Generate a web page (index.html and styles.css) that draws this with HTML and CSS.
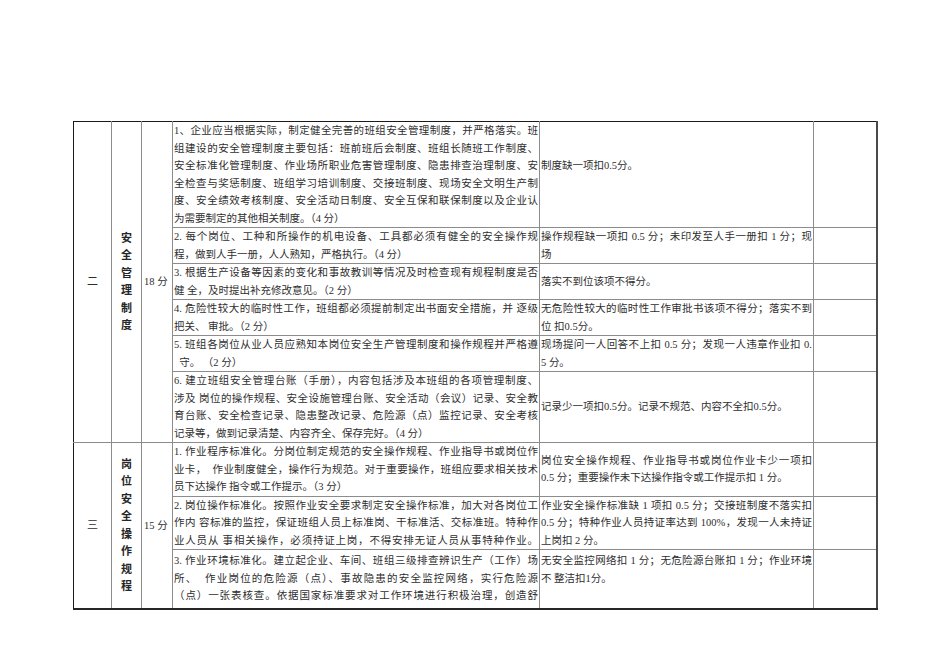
FILE: index.html
```html
<!DOCTYPE html>
<html lang="zh">
<head>
<meta charset="utf-8">
<title>班组安全管理考核表</title>
<link rel="stylesheet" href="styles.css">
</head>
<body>
<div class="page">
<table class="sheet">
<colgroup>
<col class="c-no"><col class="c-cat"><col class="c-score"><col class="c-req"><col class="c-rule"><col class="c-res">
</colgroup>
<tbody>
<tr>
<td rowspan="6" class="no">二</td>
<td rowspan="6" class="cat"><span class="vert">安全管理制度</span></td>
<td rowspan="6" class="score">18 分</td>
<td class="req">
<span class="l">1、企业应当根据实际，制定健全完善的班组安全管理制度，并严格落实。班</span>
<span class="l">组建设的安全管理制度主要包括：班前班后会制度、班组长随班工作制度、</span>
<span class="l">安全标准化管理制度、作业场所职业危害管理制度、隐患排查治理制度、安</span>
<span class="l">全检查与奖惩制度、班组学习培训制度、交接班制度、现场安全文明生产制</span>
<span class="l">度、安全绩效考核制度、安全活动日制度、安全互保和联保制度以及企业认</span>
<span class="e">为需要制定的其他相关制度。（4 分）</span>
</td>
<td class="rule"><span class="e">制度缺一项扣0.5分。</span><span class="blank"></span></td>
<td class="res"></td>
</tr>
<tr>
<td class="req">
<span class="l">2. 每个岗位、工种和所操作的机电设备、工具都必须有健全的安全操作规</span>
<span class="e">程，做到人手一册，人人熟知，严格执行。（4 分）</span>
</td>
<td class="rule">
<span class="l">操作规程缺一项扣 0.5 分；未印发至人手一册扣 1 分；现</span>
<span class="e">场</span>
</td>
<td class="res"></td>
</tr>
<tr>
<td class="req">
<span class="l">3. 根据生产设备等因素的变化和事故教训等情况及时检查现有规程制度是否</span>
<span class="e">健 全，及时提出补充修改意见。（2 分）</span>
</td>
<td class="rule"><span class="e">落实不到位该项不得分。</span></td>
<td class="res"></td>
</tr>
<tr>
<td class="req">
<span class="l">4. 危险性较大的临时性工作，班组都必须提前制定出书面安全措施，并 逐级</span>
<span class="e">把关、 审批。（2 分）</span>
</td>
<td class="rule">
<span class="l">无危险性较大的临时性工作审批书该项不得分；落实不到</span>
<span class="e">位 扣0.5分。</span>
</td>
<td class="res"></td>
</tr>
<tr>
<td class="req">
<span class="l">5. 班组各岗位从业人员应熟知本岗位安全生产管理制度和操作规程并严格遵</span>
<span class="e">&nbsp;&nbsp;守。 （2 分）</span>
</td>
<td class="rule">
<span class="l">现场提问一人回答不上扣 0.5 分；发现一人违章作业扣 0.</span>
<span class="e">5 分。</span>
</td>
<td class="res"></td>
</tr>
<tr>
<td class="req">
<span class="l">6. 建立班组安全管理台账（手册），内容包括涉及本班组的各项管理制度、</span>
<span class="l">涉及 岗位的操作规程、安全设施管理台账、安全活动（会议）记录、安全教</span>
<span class="l">育台账、安全检查记录、隐患整改记录、危险源（点）监控记录、安全考核</span>
<span class="e">记录等，做到记录清楚、内容齐全、保存完好。（4 分）</span>
</td>
<td class="rule"><span class="e">记录少一项扣0.5分。记录不规范、内容不全扣0.5分。</span></td>
<td class="res"></td>
</tr>
<tr>
<td rowspan="3" class="no">三</td>
<td rowspan="3" class="cat"><span class="vert">岗位安全操作规程</span></td>
<td rowspan="3" class="score">15 分</td>
<td class="req">
<span class="l">1. 作业程序标准化。分岗位制定规范的安全操作规程、作业指导书或岗位作</span>
<span class="l">业卡，&nbsp; 作业制度健全，操作行为规范。对于重要操作，班组应要求相关技术</span>
<span class="e">员下达操作 指令或工作提示。（3 分）</span>
</td>
<td class="rule">
<span class="l">岗位安全操作规程、作业指导书或岗位作业卡少一项扣</span>
<span class="e">0.5 分；重要操作未下达操作指令或工作提示扣 1 分。</span>
</td>
<td class="res"></td>
</tr>
<tr>
<td class="req">
<span class="l">2. 岗位操作标准化。按照作业安全要求制定安全操作标准，加大对各岗位工</span>
<span class="l">作内 容标准的监控，保证班组人员上标准岗、干标准活、交标准班。特种作</span>
<span class="l">业人员从 事相关操作，必须持证上岗，不得安排无证人员从事特种作业。</span>
</td>
<td class="rule">
<span class="l">作业安全操作标准缺 1 项扣 0.5 分；交接班制度不落实扣</span>
<span class="l">0.5 分；特种作业人员持证率达到 100%，发现一人未持证</span>
<span class="e">上岗扣 2 分。</span>
</td>
<td class="res"></td>
</tr>
<tr>
<td class="req top">
<div class="clip">
<span class="l">3. 作业环境标准化。建立起企业、车间、班组三级排查辨识生产（工作）场</span>
<span class="l">所、&nbsp; 作业岗位的危险源（点）、事故隐患的安全监控网络，实行危险源</span>
<span class="l">（点）一张表核查。依据国家标准要求对工作环境进行积极治理，创造舒</span>
</div>
</td>
<td class="rule top">
<div class="clip">
<span class="l">无安全监控网络扣 1 分；无危险源台账扣 1 分；作业环境</span>
<span class="e">不 整洁扣1分。</span>
</div>
</td>
<td class="res"></td>
</tr>
</tbody>
</table>
</div>
</body>
</html>
```

FILE: styles.css
```css
html, body {
  margin: 0;
  padding: 0;
  background: #ffffff;
}

.page {
  padding: 121px 0 0 73px;
}

.sheet {
  border-collapse: collapse;
  table-layout: fixed;
  width: 803px;
  font-family: "Liberation Serif", "Noto Sans CJK SC", serif;
  font-size: 10.5px;
  line-height: 17.5px;
  color: #2e2e2e;
  border-top: 1px solid #1a1a1a;
  border-left: 1px solid #1a1a1a;
  border-right: 2px solid #4a4a4a;
  border-bottom: 2px solid #262626;
}

.c-no { width: 38px; }
.c-cat { width: 30px; }
.c-score { width: 31px; }
.c-req { width: 367px; }
.c-rule { width: 274px; }
.c-res { width: 63px; }

.sheet td {
  border: 1px solid #8c8c8c;
  padding: 0 1px;
  vertical-align: middle;
}

.sheet tr:first-child td {
  border-top: 1px solid #1a1a1a;
}

.sheet tr:last-child td {
  border-bottom: 2px solid #262626;
}

.sheet td.no {
  border-left: 1px solid #1a1a1a;
  text-align: center;
  font-size: 11px;
}

.sheet td.res {
  border-right: 2px solid #4a4a4a;
}

.sheet td.score {
  text-align: left;
  padding-left: 2px;
}

.sheet td.top {
  vertical-align: top;
}

.vert {
  display: block;
  width: 1em;
  margin: 0 auto;
  font-size: 11px;
  font-weight: 700;
  color: #262626;
}

.l {
  display: block;
  text-align: justify;
  text-align-last: justify;
}

.e {
  display: block;
  text-align: left;
}

.blank {
  display: block;
  height: 17.5px;
}

.clip {
  height: 56px;
  padding-top: 2px;
  overflow: hidden;
}
```
